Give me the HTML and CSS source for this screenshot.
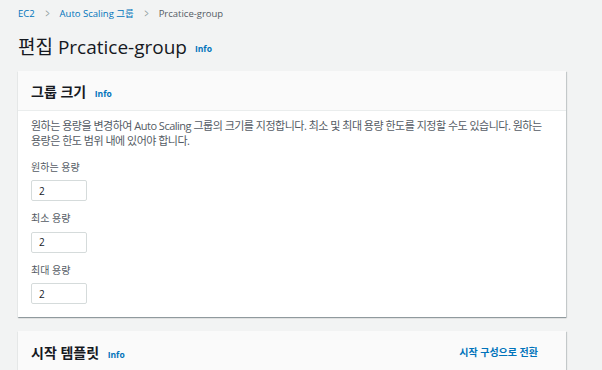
FILE: index.html
```html
<!DOCTYPE html>
<html lang="ko">
<head>
    <meta charset="UTF-8">
    <title>편집 Prcatice-group</title>
    <link rel="stylesheet" href="styles.css">
</head>
<body>
    <div class="page">
        <nav class="breadcrumb">
            <a href="#">EC2</a>
            <span class="sep">&gt;</span>
            <a href="#">Auto Scaling 그룹</a>
            <span class="sep">&gt;</span>
            <span class="current">Prcatice-group</span>
        </nav>

        <h1 class="title">편집 Prcatice-group <a href="#" class="info">Info</a></h1>

        <div class="card">
            <div class="card-header">
                <h2>그룹 크기 <a href="#" class="info">Info</a></h2>
            </div>
            <div class="card-body">
                <p class="description">원하는 용량을 변경하여 Auto Scaling 그룹의 크기를 지정합니다. 최소 및 최대 용량 한도를 지정할 수도 있습니다. 원하는 용량은 한도 범위 내에 있어야 합니다.</p>
                <div class="field">
                    <label>원하는 용량</label>
                    <input type="text" value="2">
                </div>
                <div class="field">
                    <label>최소 용량</label>
                    <input type="text" value="2">
                </div>
                <div class="field">
                    <label>최대 용량</label>
                    <input type="text" value="2">
                </div>
            </div>
        </div>

        <div class="card">
            <div class="card-header split">
                <h2>시작 템플릿 <a href="#" class="info">Info</a></h2>
                <a href="#" class="action">시작 구성으로 전환</a>
            </div>
        </div>
    </div>
</body>
</html>
```

FILE: styles.css
```css
:root {
    --link: #0073bb;
    --text: #16191f;
    --muted: #545b64;
    --bg: #f2f3f3;
    --border: #eaeded;
}

body {
    margin: 0;
    background: var(--bg);
    color: var(--text);
    font-family: "Open Sans", "Noto Sans CJK KR", sans-serif;
    overflow: hidden;
}

.page {
    width: 548px;
    padding: 4px 0 0 18px;
}

a {
    color: var(--link);
    text-decoration: none;
}

.breadcrumb {
    display: flex;
    align-items: center;
    font-size: 9.5px;
    height: 18px;
}

.breadcrumb .sep {
    color: #879596;
    margin: 0 9px;
    font-size: 12px;
    transform: scaleX(0.6);
}

.breadcrumb .current {
    color: var(--muted);
}

.title {
    font-size: 19px;
    font-weight: 400;
    margin: 11px 0 8px;
    line-height: 28px;
}

.info {
    font-size: 8.5px;
    font-weight: 700;
    margin-left: 3px;
    vertical-align: middle;
}

.card {
    background: #fff;
    box-shadow: 0 1px 1px 0 rgba(0, 28, 36, 0.3), 1px 1px 1px 0 rgba(0, 28, 36, 0.15);
    margin-bottom: 14px;
}

.card-header {
    background: #fafafa;
    border-bottom: 1px solid var(--border);
    height: 39px;
    padding: 0 13px;
    display: flex;
    align-items: center;
}

.card-header.split {
    justify-content: space-between;
    padding-right: 28px;
}

.card-header h2 {
    font-size: 14px;
    font-weight: 700;
    margin: 2px 0 0;
}

.card-header .info {
    margin-left: 5px;
}

.action {
    font-size: 10px;
    font-weight: 700;
    margin-top: 2px;
}

.card-body {
    padding: 7px 13px 13px;
}

.description {
    font-size: 11px;
    line-height: 15px;
    letter-spacing: -0.5px;
    word-break: keep-all;
    color: var(--muted);
    margin: 0 0 12px;
}

.field {
    margin-bottom: 10px;
}

.field:last-child {
    margin-bottom: 0;
}

.field label {
    display: block;
    font-size: 10px;
    color: var(--muted);
    line-height: 15px;
    margin-bottom: 3px;
}

.field input {
    box-sizing: border-box;
    width: 56px;
    height: 21px;
    padding: 0 7px;
    border: 1px solid #d5dbdb;
    border-radius: 2px;
    font-family: inherit;
    font-size: 10px;
    color: var(--text);
}
```
